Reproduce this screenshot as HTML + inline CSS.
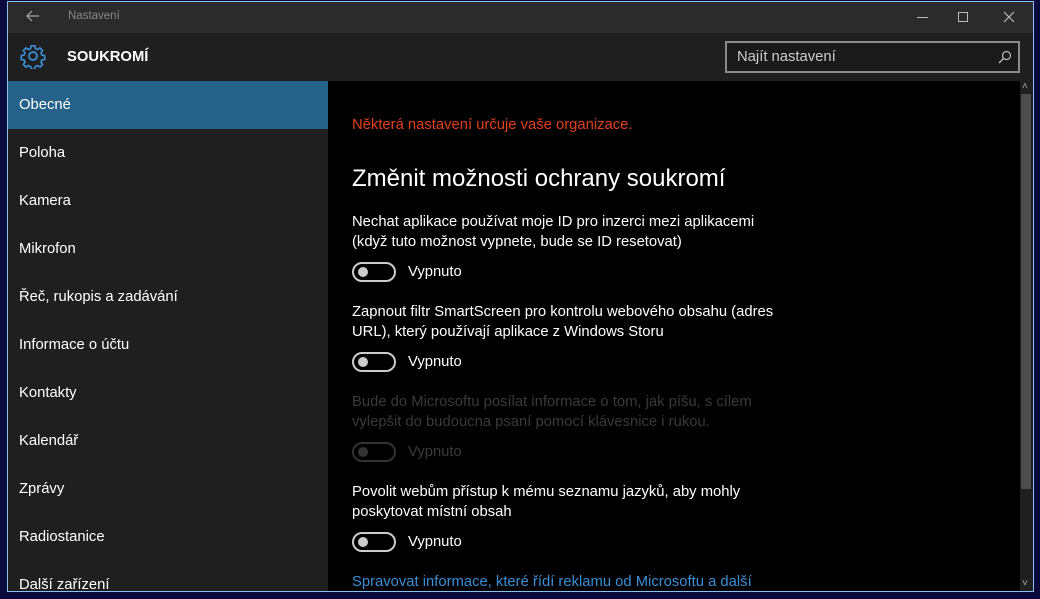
<!DOCTYPE html>
<html><head><meta charset="utf-8"><style>
*{margin:0;padding:0;box-sizing:border-box}
body{width:1040px;height:599px;background:#0a0a3c;position:relative;overflow:hidden;font-family:"Liberation Sans",sans-serif;}
.win{position:absolute;left:7px;top:1px;width:1027px;height:591px;border:1px solid #8cc0ee;background:#000;overflow:hidden}
.title{position:absolute;left:0;top:0;width:100%;height:31px;background:#2b2b2b;color:#888;font-size:11.5px}
.hdr{position:absolute;left:0;top:31px;width:100%;height:48px;background:#1f1f1f}
.nav{position:absolute;left:0;top:79px;width:320px;height:520px;background:#1f1f1f}
.nav div{height:48px;line-height:48px;padding-left:11px;color:#fff;font-size:14.8px}
.nav .sel{background:#25628a}
.t{position:absolute;color:#fff;font-size:14.8px;line-height:20px;white-space:nowrap}
.tg{position:absolute;width:44px;height:20px;border:2px solid #ccc;border-radius:10px}
.tg:after{content:"";position:absolute;left:4px;top:3px;width:10px;height:10px;border-radius:50%;background:#ccc}
.dim{color:#3a3a3a}
.tg.d{border-color:#333}.tg.d:after{background:#333}
</style></head><body>
<div class="win">
 <div class="title">
  <svg style="position:absolute;left:18px;top:8px" width="14" height="12" viewBox="0 0 14 12"><path d="M13 6H1M6 1L1 6l5 5" stroke="#aaa" fill="none" stroke-width="1.2"/></svg>
  <span style="position:absolute;left:60px;top:8px">Nastavení</span>
  <div style="position:absolute;left:909px;top:15px;width:11px;height:1px;background:#bbb"></div>
  <div style="position:absolute;left:950px;top:10px;width:10px;height:10px;border:1px solid #bbb"></div>
  <svg style="position:absolute;left:995px;top:9px" width="12" height="12"><path d="M1 1L11 11M11 1L1 11" stroke="#bbb" stroke-width="1.2"/></svg>
 </div>
 <div class="hdr">
  <svg style="position:absolute;left:12px;top:10px" width="26" height="26" viewBox="0 0 26 26"><g fill="none" stroke="#3a8fd6" stroke-width="1.8"><circle cx="13" cy="13" r="4"/><path d="M11 2h4l.7 3 2.3 1 2.6-1.7 2.8 2.8L21.7 9.7l1 2.3 3 .7v4l-3 .7-1 2.3 1.7 2.6-2.8 2.8-2.6-1.7-2.3 1-.7 3h-4l-.7-3-2.3-1-2.6 1.7-2.8-2.8 1.7-2.6-1-2.3-3-.7v-4l3-.7 1-2.3-1.7-2.6 2.8-2.8L8 6l2.3-1z" transform="scale(0.92) translate(1.1 1.1)"/></g></svg>
  <span style="position:absolute;left:59px;top:16px;color:#fff;font-weight:bold;font-size:14.8px">SOUKROMÍ</span>
  <div style="position:absolute;left:717px;top:8px;width:295px;height:32px;border:2px solid #8a8a8a;background:#1a1a1a">
   <span style="position:absolute;left:10px;top:6px;color:#ccc;font-size:14.8px">Najít nastavení</span>
   <svg style="position:absolute;right:6px;top:7px" width="14" height="14"><circle cx="8.5" cy="5.5" r="4" stroke="#bbb" fill="none" stroke-width="1.2"/><path d="M5.5 8.5L1 13" stroke="#bbb" stroke-width="1.3"/></svg>
  </div>
 </div>
 <div class="nav">
  <div class="sel">Obecné</div><div>Poloha</div><div>Kamera</div><div>Mikrofon</div><div>Řeč, rukopis a zadávání</div><div>Informace o účtu</div><div>Kontakty</div><div>Kalendář</div><div>Zprávy</div><div>Radiostanice</div><div>Další zařízení</div>
 </div>
 <div style="position:absolute;left:1012px;top:79px;width:13px;height:512px;background:#1f1f1f">
  <div style="position:absolute;left:1px;top:13px;width:10px;height:395px;background:#4d4d4d"></div>
  <span style="position:absolute;left:2px;top:0;color:#aaa;font-size:10px">˄</span>
  <span style="position:absolute;left:2px;top:497px;color:#aaa;font-size:10px">˅</span>
 </div>
 <div class="t" style="left:344px;top:113px;color:#e2401c">Některá nastavení určuje vaše organizace.</div>
 <div class="t" style="left:344px;top:162px;font-size:24px;line-height:30px">Změnit možnosti ochrany soukromí</div>
 <div class="t" style="left:344px;top:210px">Nechat aplikace používat moje ID pro inzerci mezi aplikacemi<br>(když tuto možnost vypnete, bude se ID resetovat)</div>
 <div class="tg" style="left:344px;top:260px"></div><div class="t" style="left:400px;top:260px">Vypnuto</div>
 <div class="t" style="left:344px;top:300px">Zapnout filtr SmartScreen pro kontrolu webového obsahu (adres<br>URL), který používají aplikace z Windows Storu</div>
 <div class="tg" style="left:344px;top:350px"></div><div class="t" style="left:400px;top:350px">Vypnuto</div>
 <div class="t dim" style="left:344px;top:390px">Bude do Microsoftu posílat informace o tom, jak píšu, s cílem<br>vylepšit do budoucna psaní pomocí klávesnice i rukou.</div>
 <div class="tg d" style="left:344px;top:440px"></div><div class="t dim" style="left:400px;top:440px">Vypnuto</div>
 <div class="t" style="left:344px;top:480px">Povolit webům přístup k mému seznamu jazyků, aby mohly<br>poskytovat místní obsah</div>
 <div class="tg" style="left:344px;top:530px"></div><div class="t" style="left:400px;top:530px">Vypnuto</div>
 <div class="t" style="left:344px;top:570px;color:#3a8fd6">Spravovat informace, které řídí reklamu od Microsoftu a další</div>
</div>
</body></html>
